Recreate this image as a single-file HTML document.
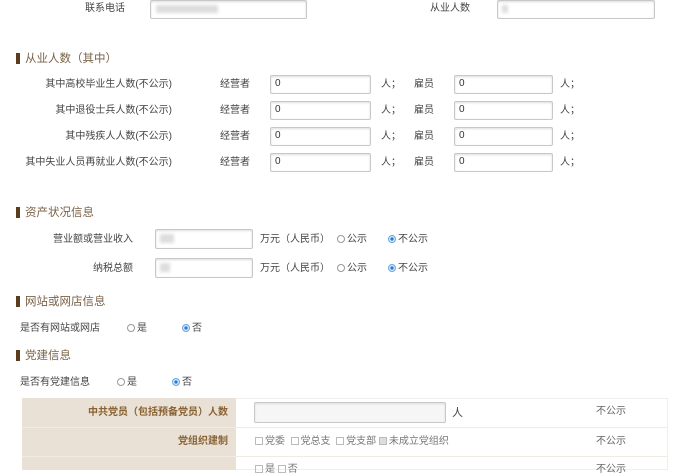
<!DOCTYPE html>
<html><head><meta charset="utf-8"><style>
*{margin:0;padding:0;box-sizing:border-box}
body{width:700px;height:470px;overflow:hidden;background:#fff;position:relative;font-family:"Liberation Sans","Noto Sans CJK SC",sans-serif;font-size:10px;color:#444}
.a{position:absolute;white-space:nowrap;line-height:12px}
.r{text-align:right}
.in{position:absolute;border:1px solid #c8c8c8;border-radius:2px;background:#fff;box-shadow:inset 0 1px 2px #ddd;font-size:10px;padding-left:4px;line-height:16px;color:#333}
.h{position:absolute;font-size:11.5px;color:#7a6248;line-height:14px;white-space:nowrap}
.h:before{content:"";position:absolute;left:-9px;top:1px;width:4px;height:11px;background:#5b3c1c}
.rd{display:inline-block;width:8px;height:8px;border:1px solid #999;border-radius:50%;vertical-align:-1px;margin-right:2px;background:#fff}
.rd.on{border-color:#6aa8e0;background:radial-gradient(circle,#2c7ccf 35%,#d7e9fa 45%)}
.cb{display:inline-block;width:8px;height:8px;border:1px solid #bbb;vertical-align:-1px;margin-right:2px}
.blur{position:absolute;background:#ddd;filter:blur(1.5px)}
</style></head><body>
<div class="a" style="left:85px;top:3px">联系电话</div>
<div class="in" style="left:150px;top:0;width:157px;height:19px"></div>
<div class="blur" style="left:156px;top:5px;width:62px;height:8px"></div>
<div class="a" style="left:430px;top:3px">从业人数</div>
<div class="in" style="left:497px;top:0;width:158px;height:19px"></div>
<div class="blur" style="left:502px;top:5px;width:6px;height:8px"></div>

<div class="h" style="left:25px;top:52px">从业人数（其中）</div>
<div class="a r" style="left:0;width:172px;top:79px">其中高校毕业生人数(不公示)</div>
<div class="a r" style="left:0;width:172px;top:105px">其中退役士兵人数(不公示)</div>
<div class="a r" style="left:0;width:172px;top:131px">其中残疾人人数(不公示)</div>
<div class="a r" style="left:0;width:172px;top:157px">其中失业人员再就业人数(不公示)</div>
<div class="a" style="left:220px;top:79px">经营者</div>
<div class="a" style="left:220px;top:105px">经营者</div>
<div class="a" style="left:220px;top:131px">经营者</div>
<div class="a" style="left:220px;top:157px">经营者</div>
<div class="in" style="left:270px;top:75px;width:101px;height:19px">0</div>
<div class="in" style="left:270px;top:101px;width:101px;height:19px">0</div>
<div class="in" style="left:270px;top:127px;width:101px;height:19px">0</div>
<div class="in" style="left:270px;top:153px;width:101px;height:19px">0</div>
<div class="a" style="left:381px;top:79px">人；</div>
<div class="a" style="left:381px;top:105px">人；</div>
<div class="a" style="left:381px;top:131px">人；</div>
<div class="a" style="left:381px;top:157px">人；</div>
<div class="a" style="left:414px;top:79px">雇员</div>
<div class="a" style="left:414px;top:105px">雇员</div>
<div class="a" style="left:414px;top:131px">雇员</div>
<div class="a" style="left:414px;top:157px">雇员</div>
<div class="in" style="left:454px;top:75px;width:99px;height:19px">0</div>
<div class="in" style="left:454px;top:101px;width:99px;height:19px">0</div>
<div class="in" style="left:454px;top:127px;width:99px;height:19px">0</div>
<div class="in" style="left:454px;top:153px;width:99px;height:19px">0</div>
<div class="a" style="left:560px;top:79px">人；</div>
<div class="a" style="left:560px;top:105px">人；</div>
<div class="a" style="left:560px;top:131px">人；</div>
<div class="a" style="left:560px;top:157px">人；</div>

<div class="h" style="left:25px;top:206px">资产状况信息</div>
<div class="a r" style="left:0;width:133px;top:234px">营业额或营业收入</div>
<div class="a r" style="left:0;width:133px;top:263px">纳税总额</div>
<div class="in" style="left:155px;top:229px;width:98px;height:20px"></div>
<div class="in" style="left:155px;top:258px;width:98px;height:20px"></div>
<div class="blur" style="left:160px;top:234px;width:14px;height:9px"></div>
<div class="blur" style="left:160px;top:263px;width:10px;height:9px"></div>
<div class="a" style="left:260px;top:234px">万元（人民币）</div>
<div class="a" style="left:260px;top:263px">万元（人民币）</div>
<div class="a" style="left:337px;top:234px"><span class="rd"></span>公示</div>
<div class="a" style="left:337px;top:263px"><span class="rd"></span>公示</div>
<div class="a" style="left:388px;top:234px"><span class="rd on"></span>不公示</div>
<div class="a" style="left:388px;top:263px"><span class="rd on"></span>不公示</div>

<div class="h" style="left:25px;top:295px">网站或网店信息</div>
<div class="a" style="left:20px;top:323px">是否有网站或网店</div>
<div class="a" style="left:127px;top:323px"><span class="rd"></span>是</div>
<div class="a" style="left:182px;top:323px"><span class="rd on"></span>否</div>

<div class="h" style="left:25px;top:349px">党建信息</div>
<div class="a" style="left:20px;top:377px">是否有党建信息</div>
<div class="a" style="left:117px;top:377px"><span class="rd"></span>是</div>
<div class="a" style="left:172px;top:377px"><span class="rd on"></span>否</div>

<div style="position:absolute;left:22px;top:398px;width:646px;height:72px;border:1px solid #eee;background:#fff"></div>
<div style="position:absolute;left:22px;top:398px;width:214px;height:72px;background:#e9e1d5"></div>
<div style="position:absolute;left:22px;top:427px;width:646px;height:1px;background:#f0ebe4"></div>
<div style="position:absolute;left:22px;top:456px;width:646px;height:1px;background:#f0ebe4"></div>
<div class="a r" style="left:22px;width:206px;top:407px;color:#8a6234;font-weight:bold">中共党员（包括预备党员）人数</div>
<div class="a r" style="left:22px;width:206px;top:436px;color:#8a6234;font-weight:bold">党组织建制</div>
<div class="in" style="left:254px;top:402px;width:192px;height:21px;background:#f6f6f6"></div>
<div class="a" style="left:452px;top:407px;font-size:11px">人</div>
<div class="a" style="left:596px;top:406px;color:#666">不公示</div>
<div class="a" style="left:596px;top:436px;color:#666">不公示</div>
<div class="a" style="left:255px;top:436px;color:#777"><span class="cb"></span>党委&nbsp;&nbsp;<span class="cb"></span>党总支&nbsp;&nbsp;<span class="cb"></span>党支部&nbsp;<span class="cb" style="background:#ddd"></span>未成立党组织</div>
<div class="a" style="left:255px;top:464px;color:#777"><span class="cb"></span>是 <span class="cb"></span>否</div>
<div class="a" style="left:596px;top:464px;color:#666">不公示</div>
</body></html>
